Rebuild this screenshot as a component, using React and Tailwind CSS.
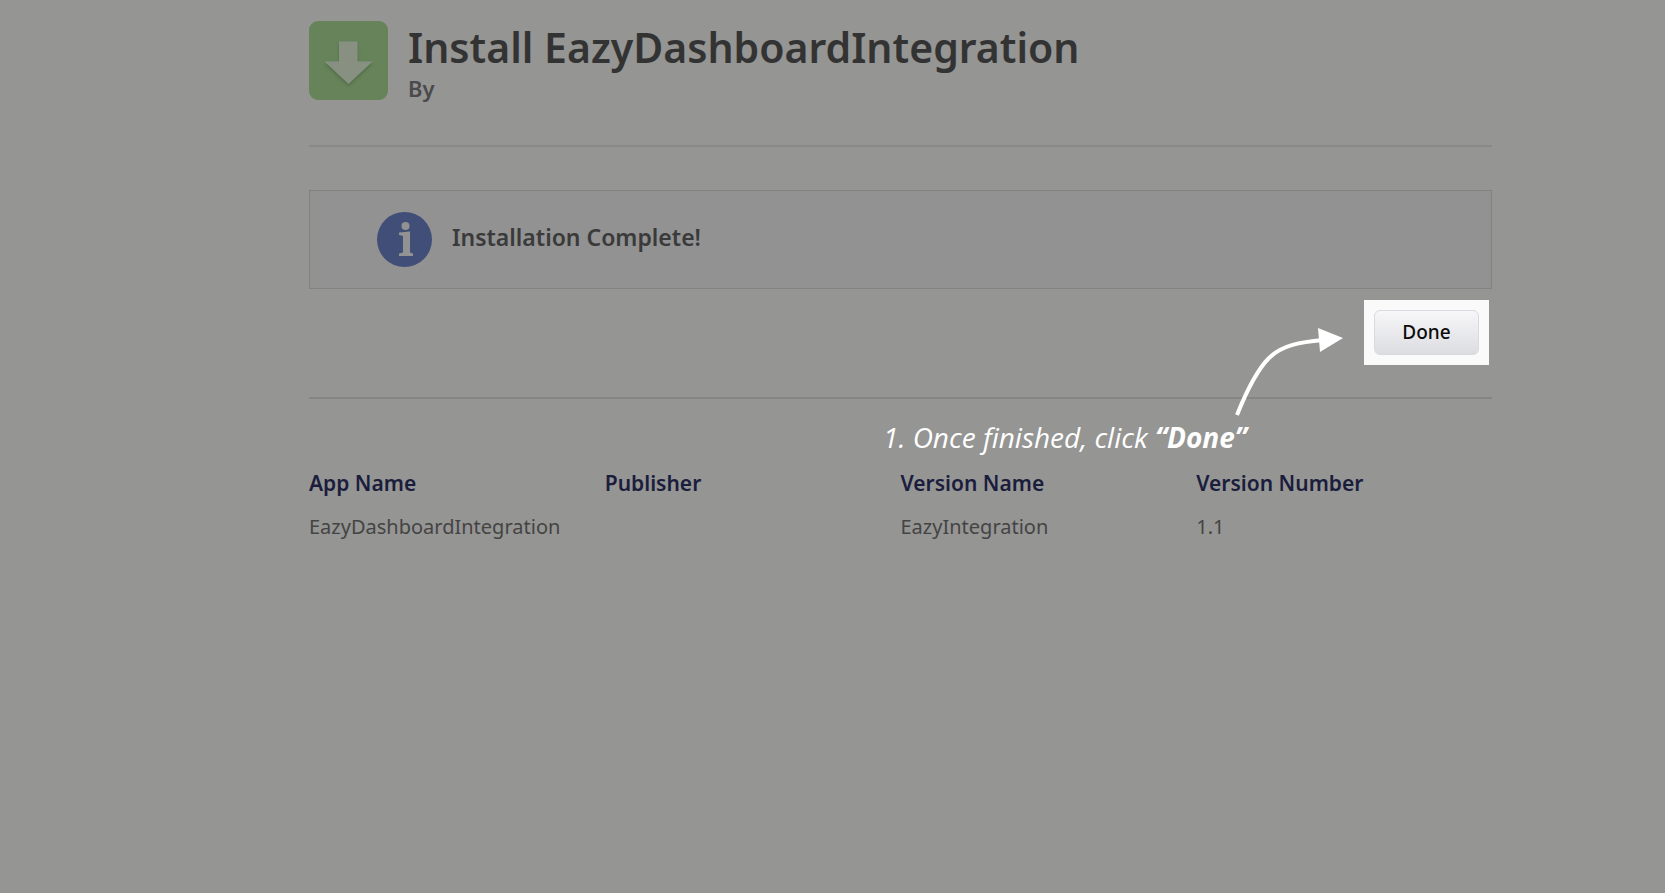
const details = [
  { label: "App Name", value: "EazyDashboardIntegration" },
  { label: "Publisher", value: "" },
  { label: "Version Name", value: "EazyIntegration" },
  { label: "Version Number", value: "1.1" },
];

function PackageIcon() {
  return (
    <svg className="size-[79px] shrink-0" viewBox="0 0 79 79" aria-hidden="true">
      <defs>
        <filter id="arrow-shadow" x="-20%" y="-20%" width="140%" height="150%">
          <feDropShadow dx="0" dy="2" stdDeviation="1.5" floodColor="#3f5a38" floodOpacity="0.6" />
        </filter>
      </defs>
      <rect width="79" height="79" rx="9" fill="#66835a" />
      <path
        d="M30 20.5H48.5V40.5H63.5L39.5 63L15.5 40.5H30Z"
        fill="#889181"
        filter="url(#arrow-shadow)"
      />
    </svg>
  );
}

function InfoIcon() {
  return (
    <svg className="size-[55px] shrink-0" viewBox="0 0 55 55" aria-hidden="true">
      <circle cx="27.5" cy="27.5" r="27.5" fill="#414f78" />
      <circle cx="28.5" cy="14" r="4" fill="#929292" />
      <path d="M22 20.5L33 19.5V40.5L36 41.5V44H22V41.5L26 40.5V24L22 23Z" fill="#929292" />
    </svg>
  );
}

function Callout() {
  return (
    <div className="pointer-events-none absolute top-[27px] right-[147px] flex w-[470px] flex-col items-end gap-[2px]">
      <svg className="h-[90px] w-[110px]" viewBox="0 0 110 90" fill="none" aria-hidden="true">
        <path
          d="M2 88C10 68 20 45 34 31C47 18 66 15 88 13"
          stroke="#fff"
          strokeWidth="4"
        />
        <path d="M83 1L108 11L85 25Z" fill="#fff" />
      </svg>
      <p className="mr-[98px] font-['Open_Sans',sans-serif] text-[28px] leading-9 whitespace-nowrap text-white italic">
        1. Once finished, click <strong className="font-bold">“Done”</strong>
      </p>
    </div>
  );
}

export default function App() {
  return (
    <main className="min-h-screen bg-[#959593] pt-[21px] pr-[173px] pl-[309px] font-['Noto_Sans',sans-serif] text-[#3a3a3a]">
      <header className="flex gap-5 border-b-2 border-[#898988] pb-[40px]">
        <PackageIcon />
        <div className="pt-[2px]">
          <h1 className="text-[41px] leading-[48px] font-semibold text-[#333333]">
            Install EazyDashboardIntegration
          </h1>
          <p className="text-[22px] leading-[34px] font-semibold text-[#4a4a4b]">By</p>
        </div>
      </header>

      <section
        role="status"
        className="mt-[43px] flex h-[99px] items-center gap-5 border border-[#828283] bg-[#929292] pl-[67px]"
      >
        <InfoIcon />
        <p className="pb-1.5 text-[23px] leading-8 font-semibold">Installation Complete!</p>
      </section>

      <div className="relative mt-[11px] flex justify-end pr-[3px]">
        <div className="bg-[#fafafa] p-[10px]">
          <button
            type="button"
            className="h-[45px] w-[105px] rounded-md border border-[#d8dade] bg-linear-to-b from-[#f7f7f9] to-[#dcdde1] font-['Noto_Sans',sans-serif] text-[19px] font-medium text-[#0c0c0c]"
          >
            Done
          </button>
        </div>
        <Callout />
      </div>

      <hr className="mt-8 border-t-2 border-[#858584]" />

      <table className="mt-[62px] w-full table-fixed text-left leading-[44px]">
        <thead>
          <tr className="text-[21px] text-[#1b1d3d]">
            {details.map((item) => (
              <th key={item.label} scope="col" className="font-semibold">
                {item.label}
              </th>
            ))}
          </tr>
        </thead>
        <tbody>
          <tr className="text-[20px] text-[#444444]">
            {details.map((item) => (
              <td key={item.label}>{item.value}</td>
            ))}
          </tr>
        </tbody>
      </table>
    </main>
  );
}
